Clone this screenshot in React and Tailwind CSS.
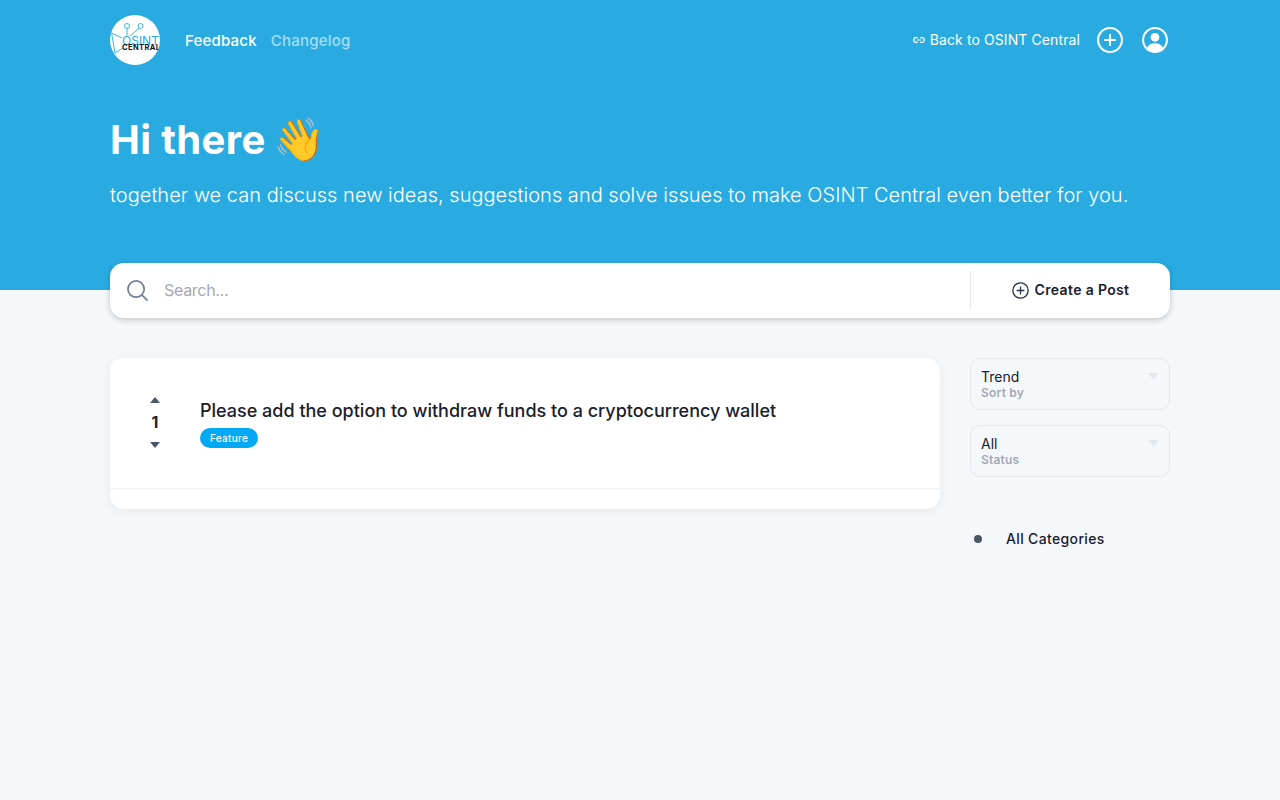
import React from "react";

function Logo() {
  return (
    <svg viewBox="0 0 50 50" className="w-[50px] h-[50px] rounded-full bg-white shrink-0">
      <g fill="none" stroke="#29abe2" strokeWidth="0.9">
        <circle cx="17" cy="11" r="2.5" />
        <circle cx="30.5" cy="11" r="2.5" />
        <path d="M17 13.5v7M29 13l-9 8M1.6 18l10.4 5M1.6 18l3.4 20M13 33L5 38" />
      </g>
      <text x="12" y="30" fontFamily="Inter, sans-serif" fontSize="12" fill="#29abe2">OSINT</text>
      <text x="12" y="35" fontFamily="Inter, sans-serif" fontSize="7.5" fontWeight="700" letterSpacing="0.4" fill="#111111">CENTRAL</text>
    </svg>
  );
}

function Caret({ up, className }) {
  return (
    <svg viewBox="0 0 10 5" preserveAspectRatio="none" className={className}>
      <path d={up ? "M5 0l5 5H0z" : "M0 0h10L5 5z"} fill="currentColor" />
    </svg>
  );
}

function Dropdown({ value, label }) {
  return (
    <div className="h-[52px] rounded-[10px] border border-[#e2e8f0] px-[10px] pt-[9px] relative">
      <div className="text-sm leading-[18px] text-[#1a202c]">{value}</div>
      <div className="text-xs leading-[13px] font-semibold tracking-[0.2px] text-[#a3a9b4]">{label}</div>
      <Caret className="absolute right-[10px] top-[14px] w-[11px] h-[7px] text-[#e2e8f0]" />
    </div>
  );
}

export default function App() {
  return (
    <div className="min-h-[800px] bg-[#f4f8fb] font-['Inter',sans-serif] [font-optical-sizing:none] text-[#1a202c]">
      <div className="h-[290px] bg-[#29abe2] text-white">
        <div className="w-[1060px] mx-auto">
          <div className="h-[80px] flex items-center">
            <Logo />
            <nav className="flex gap-[14px] ml-[25px] pt-[2px] text-[15px] font-medium tracking-[0.2px]">
              <a>Feedback</a>
              <a className="text-white/60">Changelog</a>
            </nav>
            <div className="ml-auto flex items-center">
              <svg viewBox="0 0 24 24" className="w-[14px] h-[14px]" fill="none" stroke="currentColor" strokeWidth="2">
                <path d="M10 8H7a4 4 0 000 8h3M14 8h3a4 4 0 010 8h-3M8 12h8" />
              </svg>
              <span className="ml-[4px] text-sm tracking-[0.1px]">Back to OSINT Central</span>
              <svg viewBox="0 0 24 24" className="w-[26px] h-[26px] ml-[17px]" fill="none" stroke="currentColor" strokeWidth="1.9">
                <circle cx="12" cy="12" r="11" />
                <path d="M12 6.5v11M6.5 12h11" />
              </svg>
              <svg viewBox="0 0 24 24" className="w-[26px] h-[26px] ml-[19px] mr-[2px]">
                <circle cx="12" cy="12" r="11" fill="none" stroke="currentColor" strokeWidth="1.9" />
                <circle cx="12" cy="9.5" r="4" fill="currentColor" />
                <path d="M4.5 19.5c1.5-3.5 4.5-4.5 7.5-4.5s6 1 7.5 4.5A10.5 10.5 0 0112 23a10.5 10.5 0 01-7.5-3.5z" fill="currentColor" />
              </svg>
            </div>
          </div>
          <h1 className="mt-[31px] text-[40px] leading-[58px] font-bold tracking-[0.35px]">
            Hi there <span className="-ml-[2px] text-[42px] font-['Noto_Color_Emoji',sans-serif]">👋</span>
          </h1>
          <p className="mt-[12px] text-xl leading-[28px] font-light tracking-[0.02px]">
            together we can discuss new ideas, suggestions and solve issues to make OSINT Central even better for you.
          </p>
        </div>
      </div>

      <div className="w-[1060px] mx-auto">
        <div className="-mt-[27px] h-[55px] rounded-[14px] bg-white shadow-[0_2px_6px_rgba(0,0,0,0.2)] flex items-center relative">
          <svg viewBox="0 0 22 22" className="w-[21px] h-[21px] ml-[17px]" fill="none" stroke="#718096" strokeWidth="1.8" strokeLinecap="round">
            <circle cx="9.5" cy="9.5" r="8.5" />
            <path d="M16 16l5 5" />
          </svg>
          <span className="ml-[16px] text-base tracking-[-0.3px] text-[#a3a9b4] flex-1 pb-[1px]">Search...</span>
          <div className="w-[200px] h-[39px] border-l border-[#e2e8f0] flex items-center justify-center">
            <svg viewBox="0 0 24 24" className="w-[17px] h-[17px]" fill="none" stroke="#2d3748" strokeWidth="1.9">
              <circle cx="12" cy="12" r="10.8" />
              <path d="M12 6.5v11M6.5 12h11" />
            </svg>
            <span className="ml-[6px] text-sm font-semibold tracking-[0.35px] pb-[1px]">Create a Post</span>
          </div>
        </div>

        <div className="mt-[40px] flex gap-[30px] items-start">
          <div className="w-[830px] h-[151px] rounded-[14px] bg-white shadow-[0_2px_12px_rgba(0,0,0,0.06)]">
            <div className="h-[131px] border-b border-[#edf2f7] flex">
              <div className="w-[90px] flex flex-col items-center pt-[39px] text-[#4a5568]">
                <Caret up className="w-[10px] h-[6px]" />
                <div className="mt-[7px] text-base leading-[24px] font-bold text-[#1a202c]">1</div>
                <Caret className="mt-[8px] w-[10px] h-[6px]" />
              </div>
              <div className="pt-[39px]">
                <div className="text-lg leading-[27px] font-[450]">
                  Please add the option to withdraw funds to a cryptocurrency wallet
                </div>
                <span className="inline-block mt-[4px] h-5 leading-5 px-[10px] rounded-full bg-[#03a9f4] text-white text-[10px] font-medium tracking-[0.3px] align-top">
                  Feature
                </span>
              </div>
            </div>
          </div>

          <div className="w-[200px]">
            <Dropdown value="Trend" label="Sort by" />
            <div className="mt-[15px]">
              <Dropdown value="All" label="Status" />
            </div>
            <div className="mt-[50px] h-[24px] flex items-center">
              <span className="ml-1 w-2 h-2 rounded-full bg-[#4a5568]" />
              <span className="ml-6 text-sm font-[450] tracking-[0.35px]">All Categories</span>
            </div>
          </div>
        </div>
      </div>
    </div>
  );
}
